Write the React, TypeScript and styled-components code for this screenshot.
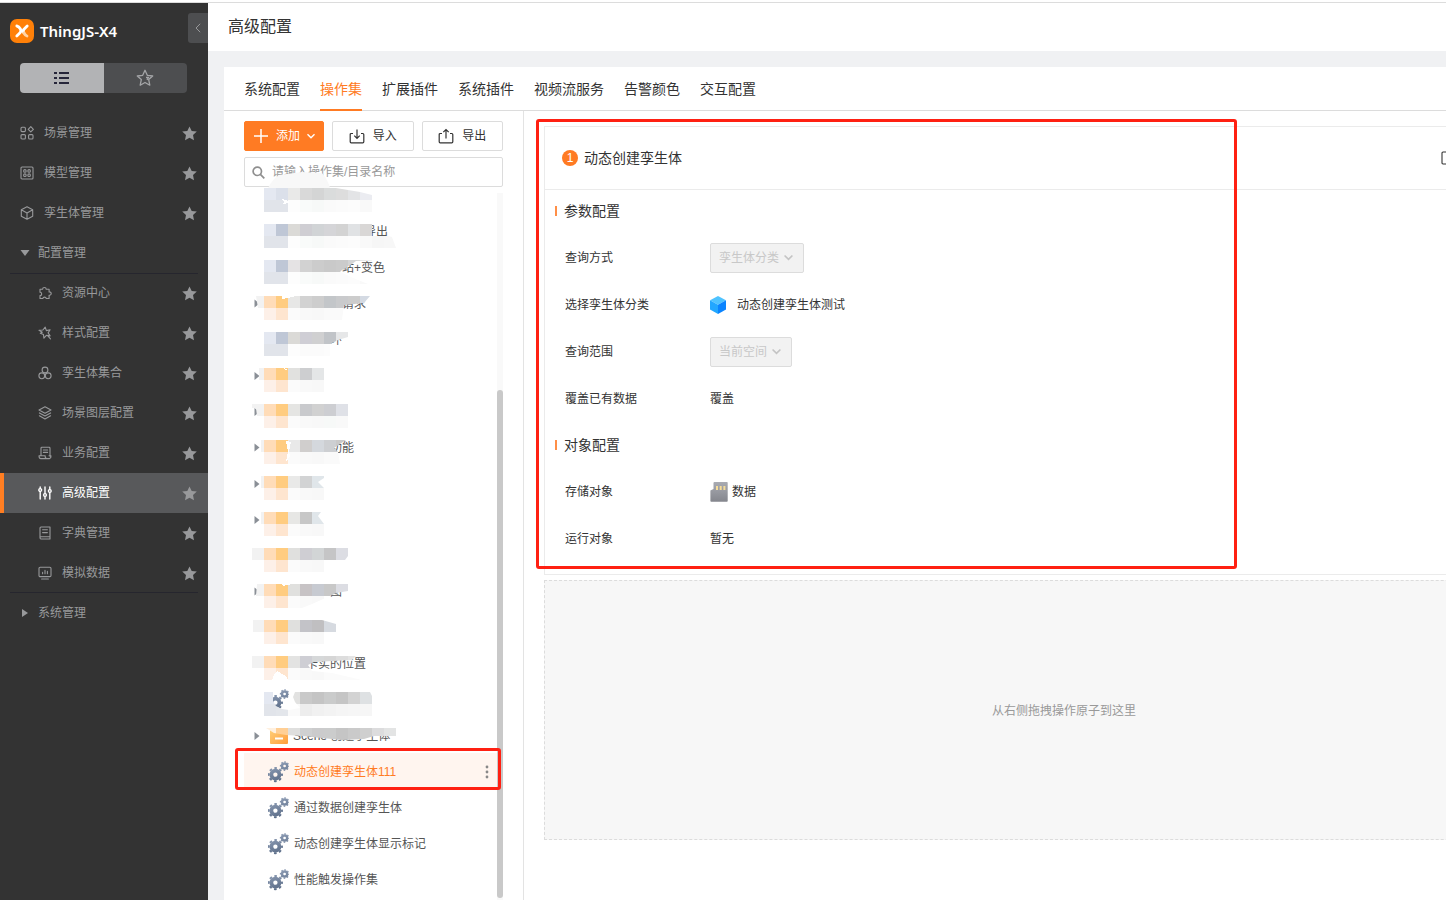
import React from "react";
import styled, { createGlobalStyle } from "styled-components";

const GlobalStyle = createGlobalStyle`
  * { box-sizing: border-box; }
  body {
    margin: 0;
    background: #fff;
    color: #333;
    font-family: "Liberation Sans", "Noto Sans CJK SC", sans-serif;
    font-size: 12px;
    line-height: 20px;
    overflow: hidden;
  }
  button, input, select { font: inherit; color: inherit; }
  button { padding: 0; border: 0; background: none; cursor: pointer; }
  ul { list-style: none; margin: 0; padding: 0; }
  a { color: inherit; text-decoration: none; }
  h1, h2, h3, dl, dt, dd { margin: 0; font-weight: 400; }
  svg { display: block; flex: none; }
`;

const Shell = styled.div`
  display: flex;
  min-height: 100vh;
  padding-top: 3px;
  background: linear-gradient(#fff 2px, #dcdcdc 2px, #dcdcdc 3px, #f0f1f3 3px);
`;

/* ---------- Sidebar ---------- */

const Sidebar = styled.aside`
  flex: none;
  width: 208px;
  background: #333;
  color: #98999b;
`;

const Brand = styled.div`
  display: flex;
  align-items: center;
  gap: 6px;
  height: 60px;
  padding: 0 0 4px 10px;
`;

const BrandName = styled.span`
  flex: 1;
  color: #fff;
  font-family: "Noto Sans", sans-serif;
  font-size: 15px;
  font-weight: 600;
`;

const CollapseButton = styled.button`
  display: grid;
  place-items: center;
  align-self: flex-start;
  width: 20px;
  height: 30px;
  margin-top: 10px;
  border-radius: 3px 0 0 3px;
  background: #4d4e50;
`;

const ViewSwitch = styled.div`
  display: flex;
  height: 30px;
  margin: 0 21px 20px 20px;
  border-radius: 4px;
  overflow: hidden;
`;

const ViewButton = styled.button<{ $on?: boolean }>`
  display: grid;
  place-items: center;
  flex: 1;
  background: ${(p) => (p.$on ? "#b2b3b5" : "#4d4e50")};
  color: ${(p) => (p.$on ? "#26263a" : "#a4a5a7")};
`;

const MenuGroup = styled.ul<{ $ruled?: boolean }>`
  position: relative;
  &::before,
  &::after {
    content: "";
    display: ${(p) => (p.$ruled ? "block" : "none")};
    position: absolute;
    left: 10px;
    right: 10px;
    top: 0;
    height: 1px;
    background: #26262e;
  }
  &::after {
    top: auto;
    bottom: 0;
  }
`;

const MenuLink = styled.a<{ $depth?: number; $active?: boolean }>`
  display: flex;
  align-items: center;
  gap: 10px;
  height: 40px;
  padding: 0 11px 0 ${(p) => (p.$depth ? 34 : 16)}px;
  border-left: 4px solid ${(p) => (p.$active ? "#ff7e22" : "transparent")};
  background: ${(p) => (p.$active ? "#58595b" : "transparent")};
  & > svg:first-child,
  & > span {
    color: ${(p) => (p.$active ? "#fff" : "inherit")};
  }
`;

const MenuText = styled.span`
  flex: 1;
`;

const GroupButton = styled.button`
  display: flex;
  align-items: center;
  gap: 8px;
  width: 100%;
  height: 40px;
  padding-left: 20px;
`;

/* ---------- Main area ---------- */

const Main = styled.main`
  display: flex;
  flex-direction: column;
  flex: 1;
  min-width: 0;
`;

const PageHeader = styled.header`
  display: flex;
  align-items: center;
  height: 48px;
  padding-left: 20px;
  background: #fff;
`;

const PageTitle = styled.h1`
  font-size: 16px;
`;

const Card = styled.section`
  display: flex;
  flex-direction: column;
  flex: 1;
  margin: 16px 0 0 16px;
  background: #fff;
`;

const Tabs = styled.nav`
  display: flex;
  gap: 20px;
  height: 44px;
  padding: 0 20px;
  border-bottom: 1px solid #dcdcdc;
  font-size: 14px;
`;

const Tab = styled.a<{ $active?: boolean }>`
  height: 44px;
  line-height: 44px;
  color: ${(p) => (p.$active ? "#ff7b23" : "#333")};
  border-bottom: 2px solid ${(p) => (p.$active ? "#ff7b23" : "transparent")};
`;

const Columns = styled.div`
  display: flex;
  flex: 1;
`;

const TreePanel = styled.div`
  display: flex;
  flex-direction: column;
  flex: none;
  width: 300px;
  padding: 10px 20px 0;
  border-right: 1px solid #e3e3e3;
`;

const Toolbar = styled.div`
  display: flex;
  gap: 8px;
`;

const ToolButton = styled.button<{ $primary?: boolean }>`
  display: flex;
  align-items: center;
  justify-content: center;
  flex: ${(p) => (p.$primary ? "0 0 80px" : "1")};
  gap: ${(p) => (p.$primary ? 7 : 8)}px;
  height: 30px;
  border: 1px solid ${(p) => (p.$primary ? "#ff7b23" : "#dcdcdc")};
  border-radius: 2px;
  background: ${(p) => (p.$primary ? "#ff7b23" : "#fff")};
  color: ${(p) => (p.$primary ? "#fff" : "#333")};
`;

const SearchBox = styled.label`
  display: flex;
  align-items: center;
  gap: 7px;
  height: 30px;
  margin-top: 6px;
  padding: 0 7px;
  border: 1px solid #dcdcdc;
  border-radius: 2px;
  color: #8f8f8f;
`;

const SearchInput = styled.input`
  flex: 1;
  min-width: 0;
  padding: 0;
  border: 0;
  outline: 0;
  background: none;
  &::placeholder {
    color: #999;
    opacity: 1;
  }
`;

const TreeBody = styled.div`
  display: flex;
  flex: 1;
  margin-top: 6px;
`;

const TreeList = styled.ul`
  flex: 1;
  margin-top: -16px;
`;

const TreeRow = styled.li<{ $selected?: boolean }>`
  position: relative;
  display: flex;
  align-items: center;
  height: 36px;
  padding-top: 2px;
  background: ${(p) => (p.$selected ? "#fff5ef" : "transparent")};
  color: ${(p) => (p.$selected ? "#ff7b23" : "#555")};
`;

const Caret = styled.span`
  display: flex;
  justify-content: center;
  width: 24px;
  padding-left: 2px;
  color: #8a8f96;
`;

const TreeLabel = styled.a`
  flex: 1;
  padding-left: 5px;
  white-space: nowrap;
`;

const Fragment = styled.span<{ $x: number }>`
  padding-left: ${(p) => p.$x}px;
  white-space: nowrap;
`;

const Veil = styled.svg`
  position: absolute;
  left: 8px;
  top: 11px;
  overflow: visible;
`;

const MoreButton = styled.button`
  width: 20px;
  height: 20px;
  display: grid;
  place-items: center;
  color: #888;
`;

const ScrollTrack = styled.div`
  display: flex;
  flex-direction: column;
  justify-content: flex-end;
  width: 6px;
  padding-bottom: 2px;
  background: #f9f9f9;
`;

const ScrollThumb = styled.div`
  height: 72%;
  border-radius: 3px;
  background: #c9c9c9;
`;

const RowMark = styled.div`
  position: absolute;
  z-index: 2;
  inset: -5px -4px -1px -9px;
  border: 3px solid #ff2012;
  border-radius: 3px;
  pointer-events: none;
`;

const Workspace = styled.div`
  flex: 1;
  min-width: 0;
  padding: 15px 0 0 20px;
  overflow: hidden;
`;

const StepCard = styled.article`
  position: relative;
  min-width: 1040px;
  border: 1px solid #ebebeb;
  padding-bottom: 12px;
`;

const StepMark = styled.div`
  position: absolute;
  top: -8px;
  left: -9px;
  bottom: 5px;
  width: 701px;
  border: 3px solid #ff2012;
  border-radius: 3px;
  pointer-events: none;
`;

const StepHeader = styled.header`
  display: flex;
  align-items: center;
  gap: 6px;
  height: 63px;
  padding: 0 128px 0 17px;
  border-bottom: 1px solid #ebebeb;
`;

const StepNumber = styled.span`
  width: 16px;
  height: 16px;
  border-radius: 50%;
  background: #ff7b23;
  color: #fff;
  line-height: 16px;
  text-align: center;
`;

const StepTitle = styled.h2`
  flex: 1;
  font-size: 14px;
`;

const Section = styled.section`
  & + & {
    margin-top: 2px;
  }
`;

const SectionTitle = styled.h3`
  display: flex;
  align-items: center;
  gap: 7px;
  height: 44px;
  padding: 0 0 2px 10px;
  font-size: 14px;
  &::before {
    content: "";
    width: 2px;
    height: 10px;
    background: #ff8f47;
  }
`;

const Field = styled.div`
  display: flex;
  align-items: center;
  height: 47px;
  padding-left: 20px;
`;

const FieldName = styled.label`
  width: 145px;
`;

const FieldValue = styled.div<{ $gap?: number }>`
  display: flex;
  align-items: center;
  gap: ${(p) => p.$gap ?? 0}px;
`;

const SelectWrap = styled.span`
  position: relative;
  display: flex;
  align-items: center;
  color: #c4c4c4;
  & > svg {
    position: absolute;
    right: 11px;
    pointer-events: none;
  }
`;

const Select = styled.select`
  appearance: none;
  height: 30px;
  padding: 0 23px 0 8px;
  border: 1px solid #dcdcdc;
  border-radius: 2px;
  background: #f2f2f2;
  color: #c8c8c8;
  opacity: 1;
`;

const DropZone = styled.div`
  display: grid;
  place-items: center;
  min-width: 1040px;
  height: 260px;
  margin-top: 5px;
  padding-top: 2px;
  border: 1px dashed #dcdcdc;
  background: #f7f7f7;
  color: #999;
`;

/* ---------- Icons ---------- */

const Line = ({ children, size = 14, width = 1.1 }: { children: React.ReactNode; size?: number; width?: number }) => (
  <svg width={size} height={size} viewBox="0 0 14 14" fill="none" stroke="currentColor" strokeWidth={width} strokeLinejoin="round" strokeLinecap="round" aria-hidden="true">
    {children}
  </svg>
);

const Logo = () => (
  <svg width="24" height="24" viewBox="0 0 24 24" aria-hidden="true">
    <rect width="24" height="24" rx="7" fill="#ff8008" />
    <path d="M6.8 7 Q9 7.4 10.4 10 Q11.6 12.3 9.8 14 L6.8 17" fill="none" stroke="#fff" strokeWidth="2.8" strokeLinecap="round" />
    <path d="M17.2 7 L14 10.2 Q12.4 12 13.8 13.8" fill="none" stroke="#fff" strokeWidth="2.8" strokeLinecap="round" />
    <path d="M14 14 Q15.2 16.4 17 17" fill="none" stroke="#ffd3a6" strokeWidth="2.8" strokeLinecap="round" />
  </svg>
);

const Star = () => (
  <svg width="15" height="15" viewBox="0 0 15 15" aria-hidden="true">
    <path fill="#98999b" d="M7.5 0.4 9.7 5l5.1.6-3.8 3.5 1 5.1-4.5-2.5L3 14.2l1-5.1L.2 5.6 5.3 5z" />
  </svg>
);

const Chevron = ({ size = 8, width = 1.4 }) => (
  <svg width={size} height={size} viewBox="0 0 8 8" fill="none" stroke="currentColor" strokeWidth={width} aria-hidden="true">
    <path d="M.5 2.2 4 5.7 7.5 2.2" />
  </svg>
);

const menuIcons: Record<string, React.ReactNode> = {
  scene: (
    <Line>
      <rect x="1" y="1.2" width="4.4" height="4.4" rx="1" />
      <rect x="1" y="8.6" width="4.4" height="4.4" rx="1" />
      <rect x="8.6" y="8.6" width="4.4" height="4.4" rx="1" />
      <path d="M10.8.7 13.4 3.3 10.8 5.9 8.2 3.3z" />
    </Line>
  ),
  model: (
    <Line>
      <rect x="1" y="1" width="12" height="12" rx="1" />
      <circle cx="4.9" cy="4.9" r="1.3" />
      <circle cx="9.1" cy="4.9" r="1.3" />
      <circle cx="4.9" cy="9.2" r="1.3" />
      <circle cx="9.1" cy="9.2" r="1.3" />
    </Line>
  ),
  cube: (
    <Line>
      <path d="M7 .8 12.7 3.8v6.4L7 13.3 1.3 10.2V3.8zM1.3 3.8 7 7l5.7-3.2M7 7v6.3" />
    </Line>
  ),
  puzzle: (
    <Line>
      <path d="M2 3.3h2.6a1.8 1.8 0 1 1 3.6 0h2.9v2.6a1.7 1.7 0 1 1 0 3.3v3.3H8.3a1.8 1.8 0 0 0-3.5 0H2V9.6a1.7 1.7 0 0 0 0-3.4z" />
    </Line>
  ),
  wand: (
    <Line>
      <path d="M1 4.3 4.9 4 7.2 1.2l1.2 3.4 3.7-.9-2 3.2 2 3-3.7-.6-2.5 2.9-.4-3.6L2.3 7.2l2-.9zM9.8 9.8l2.7 3" />
    </Line>
  ),
  rings: (
    <Line>
      <circle cx="7" cy="4" r="2.9" />
      <circle cx="3.8" cy="9.8" r="2.9" />
      <circle cx="10.2" cy="9.8" r="2.9" />
    </Line>
  ),
  layers: (
    <Line>
      <path d="M7 .8 13 4 7 7.2 1 4zM1.4 6.9 7 10l5.6-3.1M1.4 9.8 7 13l5.6-3.2" />
    </Line>
  ),
  business: (
    <Line>
      <path d="M3 9.5V2.2q0-.9.9-.9h7.2q.9 0 .9.9v8M1 9.7h6.2v1q0 1.9 2.2 1.9H2.8Q1 12.6 1 9.7M9.4 12.6h2.2q1.600-.5 1.400-2.900h-2M5.400 4h4.200M5.400 6.400h4.200" />
    </Line>
  ),
  sliders: (
    <Line width={1.4}>
      <path d="M2.2 1v1.5M2.2 5.6V13M7 1v6.4M7 10.6V13M11.8 1v2.5M11.8 6.6V13" />
      <circle cx="2.2" cy="4" r="1.4" />
      <circle cx="7" cy="9" r="1.4" />
      <circle cx="11.8" cy="5" r="1.4" />
    </Line>
  ),
  book: (
    <Line>
      <path d="M2 11.8V2q0-1 1-1h9v12H3q-1 0-1-1.2 0-1.1 1-1.1h9M4.6 3.8h4.8M4.6 6.6h4.8" />
    </Line>
  ),
  monitor: (
    <Line>
      <rect x="1" y="1.2" width="12" height="9.4" rx="1.2" />
      <path d="M4.6 6.4v1.4M7 4.4v3.4M9.4 5.4v2.4M3.6 13h6.8" />
    </Line>
  ),
};

const Gear = ({ x, y, r }: { x: number; y: number; r: number }) => {
  const step = (2 * Math.PI * r * 0.94) / 16;
  return (
    <g fill="none" stroke="url(#gearFill)">
      <circle cx={x} cy={y} r={r * 0.58} strokeWidth={r * 0.54} />
      <circle cx={x} cy={y} r={r * 0.94} strokeWidth={r * 0.28} strokeDasharray={`${step} ${step}`} strokeDashoffset={step / 2} />
    </g>
  );
};

const GearsIcon = () => (
  <svg width="21" height="22" viewBox="0 0 21 22" aria-hidden="true">
    <defs>
      <linearGradient id="gearFill" gradientUnits="userSpaceOnUse" x1="4" y1="2" x2="12" y2="22">
        <stop offset="0" stopColor="#93a2ba" />
        <stop offset="1" stopColor="#566883" />
      </linearGradient>
    </defs>
    <Gear x={7.4} y={13.6} r={7} />
    <Gear x={16.6} y={5} r={4.4} />
  </svg>
);

const FolderIcon = () => (
  <svg width="20" height="18" viewBox="0 0 20 18" aria-hidden="true">
    <defs>
      <linearGradient id="folderFill" x1="0" y1="0" x2="1" y2="1">
        <stop offset="0" stopColor="#ffd27c" />
        <stop offset="1" stopColor="#ff9d3c" />
      </linearGradient>
    </defs>
    <path d="M2 2q0-1 1-1h5l2 2h9q1 0 1 1v12q0 1-1 1H3q-1 0-1-1z" fill="url(#folderFill)" />
    <path d="M7 11.500h8" stroke="#fff" strokeWidth="2" />
  </svg>
);

const BlueCube = () => (
  <svg width="16" height="18" viewBox="0 0 16 18" aria-hidden="true">
    <path d="M8 0 16 4.300 8 8.800 0 4.300z" fill="#4fc3ff" />
    <path d="M0 4.300 8 8.800V18L0 13.500z" fill="#22a7ff" />
    <path d="M16 4.300 8 8.800V18l8-4.500z" fill="#0a84ff" />
  </svg>
);

const CardIcon = () => (
  <svg width="18" height="20" viewBox="0 0 18 20" aria-hidden="true">
    <defs>
      <linearGradient id="cardFill" x1="0" y1="0" x2="0" y2="1">
        <stop offset="0" stopColor="#a9abb2" />
        <stop offset="1" stopColor="#84868d" />
      </linearGradient>
    </defs>
    <path d="M3.500 1q0-1 1-1H17q.7 0 .7.700V19q0 .8-.8.8H1.200q-.8 0-.8-.8V8.500L3.500 7z" fill="url(#cardFill)" />
    <path d="M7 4v4M10.700 4v4M14.400 4v4" stroke="#f6dc98" strokeWidth="2" />
  </svg>
);

/* ---------- Tree data ---------- */

type Node = {
  icon?: "gears" | "folder";
  caret?: boolean;
  label?: string;
  labelX?: number;
  from?: number;
  top?: string;
  bottom?: string;
  shape?: string;
  glare?: string;
};

const FILE_BOTTOM = "e1e4ea e1e4ea fdfdfd f9fbfa f7f9f8 fafafa fbfbfb fcfcfc f9f9f9";
const DIR_BOTTOM = "fff fdf0e8 fee5cf fbfbfb f9f9f9 f8f8f8";

const nodes: Node[] = [
  {
    from: 1, top: "e4e8f1 dbe0ea e9e9e8 d9d9d9 d4d5d5 dadcdc dddddd e3e4e6 ebecf1", bottom: FILE_BOTTOM,
    shape: "12,0 84,0 108,4 120,7 120,24 12,24", glare: "30,11 37,13 37,15 30,16 32,14",
  },
  {
    labelX: 120, label: "导出", from: 1, top: "e4e8f1 bfc7d6 dbdad7 cfced3 d1d4d6 d5d5d8 d3d3d3 e0e2e4 d9d7d6", bottom: FILE_BOTTOM + " f6f6f6 f7f7f7",
    shape: "12,0 122,0 120,8 132,11 140,13 144,24 12,24",
  },
  {
    labelX: 98, label: "站+变色", from: 1, top: "e4e8f1 bfc7d6 e5e3e4 d2d2d2 cccccc c9c9c9 cbcbcb d4d5d6 dee0e1", bottom: FILE_BOTTOM,
    shape: "12,0 130,0 104,1 100,4 90,10 88,12 106,20 116,24 12,24",
  },
  {
    caret: true, labelX: 98, label: "请求", from: 0, top: "f2f2f2 ffdcb8 ffcc80 e7e7e6 d2d2d2 cdcdcd c3c6c9 c9cacc cccccc d4dae3", bottom: DIR_BOTTOM + " fafafa fafafa",
    shape: "4,0 118,0 112,7 92,9 90,24 12,24 12,12 6,12", glare: "30,0 44,0 36,2 30,3",
  },
  {
    labelX: 86, label: "环", from: 1, top: "e4e8f1 bfc7d6 dbdad7 cfced5 d0d0d1 c1c4c8 e6e7e8", bottom: "e1e4ea e1e4ea fdfdfd fbfbfb fbfbfb fcfcfc",
    shape: "12,0 96,0 96,5 86,8 78,12 78,24 12,24",
  },
  { caret: true, from: 0, top: "f2f2f2 ffdcb8 ffcc80 e1e1df cdced0 e4e6e7", bottom: DIR_BOTTOM, shape: "7,0 72,0 72,24 12,24 12,12 7,12", glare: "31,0 34,3 35,1" },
  { caret: true, from: 0, top: "f2f2f2 ffdcb8 ffcc80 e5e5e3 c9cacd d1d1d1 cdced2 dfe1e7", bottom: DIR_BOTTOM + " f7f9f8 f9f9f9", shape: "0,0 96,0 96,24 12,24 12,12 5,12 4,4 0,4" },
  {
    caret: true, labelX: 86, label: "功能", from: 0, top: "f2f2f2 ffdcb8 ffcc80 e9e9e9 d0cecd d4d8dd cdcfd2 c9c9c9", bottom: DIR_BOTTOM + " fafafa fafafa",
    shape: "9,0 94,0 82,8 86,12 88,24 12,24 12,12 9,12", glare: "34,1 39,2 37,12 38,16 34,22 36,12",
  },
  { caret: true, from: 0, top: "f2f2f2 ffdcb8 ffcc80 e9e9e8 d2d3d4 e0e6ea", bottom: DIR_BOTTOM, shape: "9,0 72,0 72,2 66,6 72,12 72,24 12,24 12,12 9,12" },
  { caret: true, from: 0, top: "f2f2f2 ffdcb8 ffcc80 e7e7e5 c7c7c7 e0e6ea", bottom: DIR_BOTTOM, shape: "9,0 69,0 66,4 72,12 72,24 12,24 12,12 9,12" },
  { from: 0, top: "f2f2f2 ffdcb8 ffcc80 e0e0de cfced3 d2d5d6 c5c5c6 dcdde3", bottom: DIR_BOTTOM, shape: "0,0 96,0 96,8 93,12 93,24 12,24 12,12 0,12" },
  {
    caret: true, labelX: 86, label: "图", from: 0, top: "f2f2f2 ffdcb8 ffcc80 e0e0de c7c3c5 c7cad1 c8c8c8 dcdde3", bottom: DIR_BOTTOM,
    shape: "5,0 96,0 96,7 84,9 78,12 60,20 50,24 12,24 12,12 4,12", glare: "30,0 40,0 31,2",
  },
  { from: 0, top: "f2f2f2 ffdcb8 ffcc80 e0e0de c3c3c8 c0bfc1 d6dae0", bottom: DIR_BOTTOM + " fff", shape: "1,0 70,0 84,4 84,24 12,24 12,12 1,12" },
  {
    labelX: 62, label: "卡实的位置", from: 0, top: "f2f2f2 ffdcb8 ffcc80 e3e3e2 ceced4 d6d8d9 d6d6d6 dddddd e4e4e4", bottom: DIR_BOTTOM + " fbfbfb fbfbfb fbfbfb",
    shape: "0,0 104,0 100,4 62,6 56,9 60,15 80,17 110,24 12,24 12,12 0,12", glare: "22,19 25,15 34,20 36,24 20,24",
  },
  {
    icon: "gears", from: 1, top: "e4e8f1 fff e2e2e1 c9c9c9 c4c4c4 cacbcb c5c5c5 d3d3d3 dee1e3", bottom: "e1e4ea e3e6eb fafafa ededed f1f1f1 f3f3f3 f5f5f5 f6f6f6 f6f6f6",
    shape: "12,0 21,0 21,9 24,14 30,17 37,18 48,16 43,10 41,5 43,0 118,0 120,4 120,24 12,24",
  },
  {
    icon: "folder", caret: true, label: "Scene 创建孪生体", from: 1, top: "fff0df ffcf95 dfdfde cfd0d1 cbcbcc cbcccc c5c5c5 cacaca cfcfcf dcdcdd e3e4e4", bottom: "",
    shape: "14,0 144,0 144,8 122,8 112,11 90,12 70,10 50,8 34,7 22,5",
  },
  { icon: "gears", label: "动态创建孪生体111" },
  { icon: "gears", label: "通过数据创建孪生体" },
  { icon: "gears", label: "动态创建孪生体显示标记" },
  { icon: "gears", label: "性能触发操作集" },
];

const SELECTED = 16;

const Mosaic = ({ node, id }: { node: Node; id: string }) => {
  const lines = [node.top ?? "", node.bottom ?? ""].map((line) => line.split(" ").filter(Boolean));
  const start = node.from ?? 0;
  return (
    <Veil width="144" height="24" viewBox="0 0 144 24" shapeRendering="crispEdges" aria-hidden="true">
      <clipPath id={id}>
        <polygon points={node.shape} />
      </clipPath>
      <g clipPath={`url(#${id})`}>
        {lines.map((cells, row) =>
          cells.map((color, i) => (
            <rect key={`${row}-${i}`} x={(start + i) * 12} y={row * 12} width="12" height="12" fill={`#${color}`} />
          )),
        )}
      </g>
      {node.glare && <polygon points={node.glare} fill="#fff" />}
    </Veil>
  );
};

const TreeItem = ({ node, index }: { node: Node; index: number }) => {
  const selected = index === SELECTED;
  return (
    <TreeRow $selected={selected}>
      {node.labelX === undefined && (
        <Caret>
          {node.caret && (
            <svg width="6" height="8" viewBox="0 0 6 8" aria-hidden="true">
              <path d="M.5 0 5.500 4 .5 8z" fill="currentColor" />
            </svg>
          )}
        </Caret>
      )}
      {node.icon === "gears" && <GearsIcon />}
      {node.icon === "folder" && <FolderIcon />}
      {node.labelX !== undefined && (
        <>
          {node.caret && (
            <Veil width="24" height="14" viewBox="0 0 24 14" aria-hidden="true">
              <path d="M2.500 3.500 7.500 7.500 2.500 11.500z" fill="#8a8f96" />
            </Veil>
          )}
          <Fragment $x={node.labelX}>{node.label}</Fragment>
        </>
      )}
      {node.labelX === undefined && node.label && <TreeLabel href="#">{node.label}</TreeLabel>}
      {node.shape && <Mosaic node={node} id={`veil-${index}`} />}
      {index === 0 && (
        <Veil width="144" height="24" viewBox="0 0 144 24" aria-hidden="true">
          <path d="M16 0Q20-8 27-13L50-16 70-15Q76-8 78 0z" fill="#f8f8f8" />
        </Veil>
      )}
      {selected && (
        <>
          <MoreButton aria-label="更多">
            <svg width="4" height="14" viewBox="0 0 4 14" fill="currentColor" aria-hidden="true">
              <circle cx="2" cy="2" r="1.400" />
              <circle cx="2" cy="7" r="1.400" />
              <circle cx="2" cy="12" r="1.400" />
            </svg>
          </MoreButton>
          <RowMark />
        </>
      )}
    </TreeRow>
  );
};

/* ---------- Page ---------- */

const topMenu = [
  ["scene", "场景管理"],
  ["model", "模型管理"],
  ["cube", "孪生体管理"],
];

const configMenu = [
  ["puzzle", "资源中心"],
  ["wand", "样式配置"],
  ["rings", "孪生体集合"],
  ["layers", "场景图层配置"],
  ["business", "业务配置"],
  ["sliders", "高级配置"],
  ["book", "字典管理"],
  ["monitor", "模拟数据"],
];

const tabs = ["系统配置", "操作集", "扩展插件", "系统插件", "视频流服务", "告警颜色", "交互配置"];

const MenuItem = ({ icon, text, depth, active }: { icon: string; text: string; depth?: number; active?: boolean }) => (
  <li>
    <MenuLink href="#" $depth={depth} $active={active}>
      {menuIcons[icon]}
      <MenuText>{text}</MenuText>
      <Star />
    </MenuLink>
  </li>
);

const DisabledSelect = ({ id, value }: { id: string; value: string }) => (
  <SelectWrap>
    <Select id={id} disabled defaultValue={value}>
      <option>{value}</option>
    </Select>
    <Chevron size={9} width={1.5} />
  </SelectWrap>
);

export default function App() {
  return (
    <>
      <GlobalStyle />
      <Shell>
        <Sidebar>
          <Brand>
            <Logo />
            <BrandName>ThingJS-X4</BrandName>
            <CollapseButton aria-label="收起">
              <svg width="6" height="10" viewBox="0 0 6 10" fill="none" stroke="#98999b" aria-hidden="true">
                <path d="M5.200.8 1 5l4.200 4.200" />
              </svg>
            </CollapseButton>
          </Brand>
          <ViewSwitch>
            <ViewButton $on aria-label="列表">
              <svg width="15" height="12" viewBox="0 0 15 12" stroke="currentColor" strokeWidth="2" shapeRendering="crispEdges" aria-hidden="true">
                <path d="M0 1h3M5 1h10M0 6h3M5 6h10M0 11h3M5 11h10" />
              </svg>
            </ViewButton>
            <ViewButton aria-label="收藏">
              <svg width="18" height="18" viewBox="0 0 18 18" fill="none" stroke="currentColor" strokeWidth="1.300" strokeLinejoin="round" aria-hidden="true">
                <path d="M9 1.300 11.300 6.300 16.700 7 12.700 10.600 13.800 16.200 9 13.500 4.200 16.200 5.300 10.600 1.300 7 6.700 6.300z" />
                <path d="M10 8.500h2.500l-1.500 2.500" />
              </svg>
            </ViewButton>
          </ViewSwitch>
          <nav>
            <MenuGroup>
              {topMenu.map(([icon, text]) => (
                <MenuItem key={text} icon={icon} text={text} />
              ))}
            </MenuGroup>
            <GroupButton aria-expanded="true">
              <svg width="10" height="6" viewBox="0 0 10 6" aria-hidden="true">
                <path d="M.5 0h9L5 6z" fill="currentColor" />
              </svg>
              配置管理
            </GroupButton>
            <MenuGroup $ruled>
              {configMenu.map(([icon, text]) => (
                <MenuItem key={text} icon={icon} text={text} depth={1} active={icon === "sliders"} />
              ))}
            </MenuGroup>
            <GroupButton aria-expanded="false">
              <svg width="10" height="8" viewBox="0 0 10 8" aria-hidden="true">
                <path d="M2 0 8 4 2 8z" fill="currentColor" />
              </svg>
              系统管理
            </GroupButton>
          </nav>
        </Sidebar>

        <Main>
          <PageHeader>
            <PageTitle>高级配置</PageTitle>
          </PageHeader>
          <Card>
            <Tabs>
              {tabs.map((tab, i) => (
                <Tab key={tab} href="#" $active={i === 1}>
                  {tab}
                </Tab>
              ))}
            </Tabs>
            <Columns>
              <TreePanel>
                <Toolbar>
                  <ToolButton $primary>
                    <svg width="16" height="16" viewBox="0 0 16 16" stroke="currentColor" strokeWidth="1.500" aria-hidden="true">
                      <path d="M1 8h14M8 1v14" />
                    </svg>
                    添加
                    <Chevron />
                  </ToolButton>
                  <ToolButton>
                    <svg width="16" height="16" viewBox="0 0 16 16" fill="none" stroke="#333" strokeWidth="1.200" aria-hidden="true">
                      <path d="M4 5.500H2.200q-1 0-1 1v7.300q0 1 1 1h11.600q1 0 1-1V6.500q0-1-1-1H12M8 1.500v8.800M5.300 7.600 8 10.300l2.700-2.700" />
                    </svg>
                    导入
                  </ToolButton>
                  <ToolButton>
                    <svg width="16" height="16" viewBox="0 0 16 16" fill="none" stroke="#333" strokeWidth="1.200" aria-hidden="true">
                      <path d="M4 5.500H2.200q-1 0-1 1v7.300q0 1 1 1h11.600q1 0 1-1V6.500q0-1-1-1H12M8 10.500V1.500M5.300 4.200 8 1.500l2.700 2.700" />
                    </svg>
                    导出
                  </ToolButton>
                </Toolbar>
                <SearchBox>
                  <svg width="13" height="13" viewBox="0 0 13 13" fill="none" stroke="currentColor" strokeWidth="1.700" aria-hidden="true">
                    <circle cx="5.300" cy="5.300" r="4.200" />
                    <path d="M8.400 8.400 12.300 12.300" />
                  </svg>
                  <SearchInput type="text" aria-label="搜索" placeholder="请输入操作集/目录名称" />
                </SearchBox>
                <TreeBody>
                  <TreeList>
                    {nodes.map((node, i) => (
                      <TreeItem key={i} node={node} index={i} />
                    ))}
                  </TreeList>
                  <ScrollTrack>
                    <ScrollThumb />
                  </ScrollTrack>
                </TreeBody>
              </TreePanel>

              <Workspace>
                <StepCard>
                  <StepHeader>
                    <StepNumber>1</StepNumber>
                    <StepTitle>动态创建孪生体</StepTitle>
                    <button aria-label="复制">
                      <Line>
                        <rect x="1" y="1" width="12" height="12" rx="1" />
                      </Line>
                    </button>
                  </StepHeader>
                  <Section>
                    <SectionTitle>参数配置</SectionTitle>
                    <Field>
                      <FieldName htmlFor="query-mode">查询方式</FieldName>
                      <DisabledSelect id="query-mode" value="孪生体分类" />
                    </Field>
                    <Field>
                      <FieldName as="span">选择孪生体分类</FieldName>
                      <FieldValue $gap={11}>
                        <BlueCube />
                        动态创建孪生体测试
                      </FieldValue>
                    </Field>
                    <Field>
                      <FieldName htmlFor="query-range">查询范围</FieldName>
                      <DisabledSelect id="query-range" value="当前空间" />
                    </Field>
                    <Field>
                      <FieldName as="span">覆盖已有数据</FieldName>
                      <FieldValue>覆盖</FieldValue>
                    </Field>
                  </Section>
                  <Section>
                    <SectionTitle>对象配置</SectionTitle>
                    <Field>
                      <FieldName as="span">存储对象</FieldName>
                      <FieldValue $gap={4}>
                        <CardIcon />
                        数据
                      </FieldValue>
                    </Field>
                    <Field>
                      <FieldName as="span">运行对象</FieldName>
                      <FieldValue>暂无</FieldValue>
                    </Field>
                  </Section>
                  <StepMark />
                </StepCard>
                <DropZone>从右侧拖拽操作原子到这里</DropZone>
              </Workspace>
            </Columns>
          </Card>
        </Main>
      </Shell>
    </>
  );
}
